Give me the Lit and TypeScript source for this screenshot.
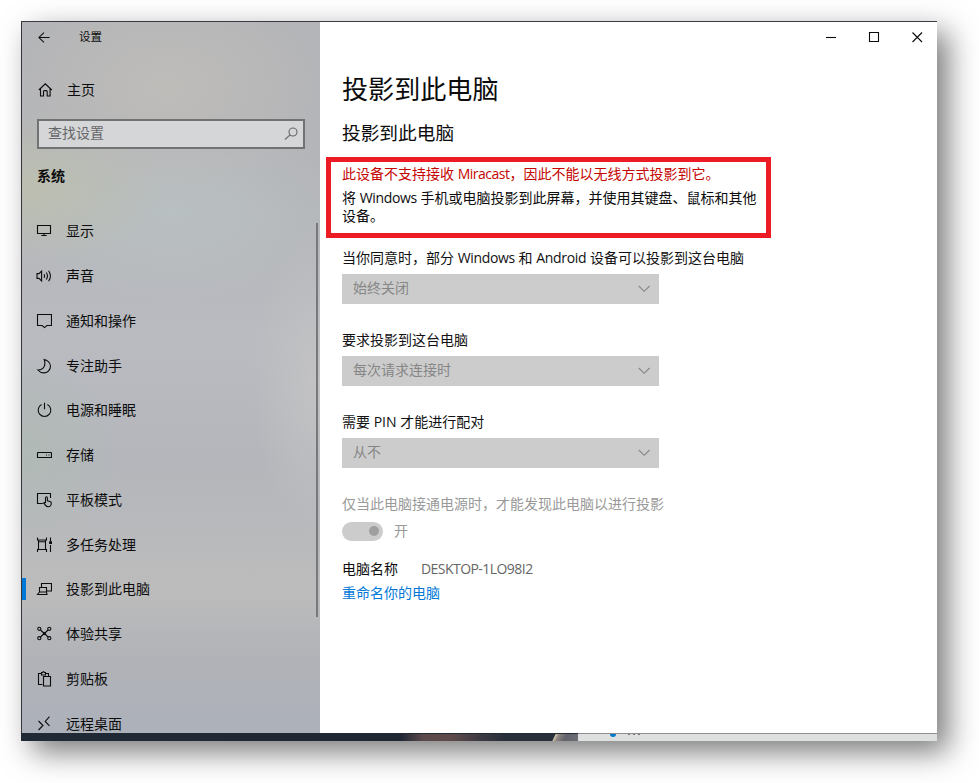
import { LitElement, html, css, svg } from "lit";
import { customElement, property } from "lit/decorators.js";

const icons: Record<string, unknown> = {
  back: svg`<path d="M14.500 8H3.100M8.500 2.800 3.100 8 8.500 13.200"/>`,
  home: svg`<path d="M1.800 8 8.300 1.800 14.800 8M3.500 6.600v7.400h3V9.600a1 1 0 0 1 1-1h1.700a1 1 0 0 1 1 1V14h2.900V6.600"/>`,
  search: svg`<circle cx="10" cy="6" r="4"/><path d="M7.100 8.900 2 13.500"/>`,
  display: svg`<path d="M1.500 2.500h13v8h-13zM8 10.500v2M5.300 12.500h5.400"/>`,
  sound: svg`<path d="M1 5.600h2L5.600 3v10L3 10.400H1zM8 6.200q1.100 1.800 0 3.600M10.300 4.500q2.300 3.500 0 7M12.600 2.800q3.700 5.200 0 10.400"/>`,
  notice: svg`<path d="M1.500 1.500h14v11h-4.600L8.500 14.600 6.100 12.500H1.500z"/>`,
  moon: svg`<path d="M8.200 1.500c2.600.6 6.300 2.900 6.300 6.500 0 3.800-2.700 6.900-6.700 6.900-2.800 0-4.600-1.300-6-2.900 1.800.1 3.700-.2 5-1.600C9.200 8 9.200 4.400 8.200 1.500z"/>`,
  power: svg`<path d="M5.600 2.600a6.300 6.300 0 1 0 5.800 0M8.500 .7v6.500"/>`,
  storage: svg`<path d="M2 5.500h13l.5.500v4.500h-14V6z"/><path d="M10 8h1M12.500 8h1"/>`,
  tablet: svg`<path d="M6.800 11.500H1.500V1.500h13v4.500"/><path d="M9.500 11V5.900q0-1.200.95-1.200t.95 1.200v3l2.600.6q1.400.4 1.300 1.700-.1 1.400-.8 2.500-.7 1-2.300 1-1.700 0-2.600-1.300L7.600 10.900q.7-.9 1.900.1"/>`,
  tasks: svg`<path d="M1.500 .5v2.500h9V.5M1.500 15v-2.500h9V15M2.500 3v9.500M9.500 3v9.500M3 4.700h6M14.500 .5v4M14.500 8V15"/><path d="M13.700 4.800h1.700v1.700h-1.700z" fill="currentColor"/>`,
  project: svg`<path d="M5.500 6.500v-4h10v7.500h-5M3.500 6.500h7v4.500h-7zM3.500 11l-2 2.500h9.500l-.5-2.500"/>`,
  share: svg`<circle cx="3.300" cy="2.800" r="1.600"/><circle cx="13.300" cy="2.800" r="1.600"/><circle cx="3.300" cy="12.200" r="1.600"/><circle cx="13.300" cy="12.200" r="1.600"/><path d="M4.500 4l7.600 7M12.100 4l-7.600 7"/><circle cx="8.300" cy="7.500" r="1"/>`,
  clipboard: svg`<path d="M6.500 13.500h-4v-11h3V1.500h1L7.500 .6l1 .9h1v1h3v2.500M5.500 2.500v1.500h4V2.500"/><path d="M7.500 5.500h7v9.500h-7z"/>`,
  remote: svg`<path d="M2.500 5 7 9.500 2.500 14M13.500 .7 9.200 5.400l4.300 4.400"/>`,
  chevron: svg`<path d="M2.800 5 8.200 10.300 13.600 5"/>`,
  min: svg`<path d="M3 8.500h10"/>`,
  max: svg`<path d="M3.500 3.500h9v9h-9z"/>`,
  close: svg`<path d="M3.500 3.500l9.500 9.500M13 3.500 3.500 13"/>`,
};

@customElement("ui-icon")
class UiIcon extends LitElement {
  @property() name = "";
  static styles = css`
    :host { display: block; flex: none; width: 16px; height: 16px; }
    svg { display: block; width: 100%; height: 100%; fill: none; stroke: currentColor; stroke-width: 1.1; }
  `;
  render() {
    return html`<svg viewBox="0 0 16 16">${icons[this.name]}</svg>`;
  }
}

@customElement("select-field")
class SelectField extends LitElement {
  @property() value = "";
  static styles = css`
    :host { display: block; height: 82px; }
    .label { height: 26px; line-height: 20px; color: #111; white-space: nowrap; }
    .box {
      box-sizing: border-box; width: 317px; height: 30px; padding: 0 7px 0 11px;
      display: flex; align-items: center; justify-content: space-between;
      background: #ccc; color: #868686;
    }
    .value { height: 22px; line-height: 20px; }
  `;
  render() {
    return html`<div class="label"><slot></slot></div>
      <div class="box"><span class="value">${this.value}</span><ui-icon name="chevron"></ui-icon></div>`;
  }
}

const nav: [string, string][] = [
  ["display", "显示"], ["sound", "声音"], ["notice", "通知和操作"], ["moon", "专注助手"],
  ["power", "电源和睡眠"], ["storage", "存储"], ["tablet", "平板模式"], ["tasks", "多任务处理"],
  ["project", "投影到此电脑"], ["share", "体验共享"], ["clipboard", "剪贴板"], ["remote", "远程桌面"],
];

@customElement("app-root")
class AppRoot extends LitElement {
  static styles = css`
    :host {
      display: block; box-sizing: border-box; width: 979px; height: 783px; padding: 21px;
      overflow: hidden; background: #fff; color: #0c0c0c;
      font: 14px/20px "Open Sans", "Noto Sans CJK SC", sans-serif;
    }
    * { box-sizing: border-box; }
    .window {
      width: 916px; height: 720px; display: flex; flex-direction: column;
      border-top: 1px solid #3a3a42; box-shadow: 11px 11px 28px rgba(0, 0, 0, .52);
    }
    .body { display: flex; height: 711px; }
    .side {
      width: 299px; height: 711px; display: flex; flex-direction: column; overflow: hidden;
      border-left: 1px solid #35363b; position: relative;
      background:
        radial-gradient(ellipse 160px 110px at 145px 65px, #bebcb9, rgba(190, 188, 185, 0)),
        radial-gradient(ellipse 130px 80px at 10px 165px, #bcbfb0, rgba(188, 191, 176, 0)),
        radial-gradient(ellipse 190px 90px at 150px 190px, #b9c0c1, rgba(185, 192, 193, 0)),
        radial-gradient(ellipse 100px 100px at 0 430px, #b1bab6, rgba(177, 186, 182, 0)),
        radial-gradient(ellipse 70px 150px at 299px 360px, #c3c3c4, rgba(195, 195, 196, 0)),
        linear-gradient(#b4b5b8, #b4b5b9 25%, #b9bbc0 45%, #b4b6bb 62%, #bcbcbc 80%, #b0b2b7 90%, #adb1ba);
    }
    .side > * { flex: none; }
    .titlebar { display: flex; align-items: center; height: 30px; padding-left: 14px; gap: 28px; font-size: 11.5px; }
    .titlebar ui-icon { width: 15px; height: 15px; }
    .home { display: flex; align-items: center; height: 30px; margin-top: 23px; padding-left: 15px; gap: 14px; }
    .search {
      display: flex; align-items: center; justify-content: space-between; width: 268px; height: 30px;
      margin: 14px 0 0 15px; padding: 0 4px 0 9px; border: 2px solid #717274;
      background: #d5d6d7; color: #66676a;
    }
    .search span { height: 22px; }
    .section { height: 20px; margin: 17px 0 0 15px; font-weight: 700; }
    .nav { margin-top: 23px; }
    .item { display: flex; align-items: center; height: 44.75px; padding-left: 14px; gap: 14px; position: relative; white-space: nowrap; }
    .item.active::before { content: ""; position: absolute; left: 0; top: 11px; width: 4px; height: 22px; background: #0078d7; }
    .thumb { position: absolute; right: 2px; top: 201px; width: 2px; height: 394px; background: #77787b; }
    .main { flex: 1; height: 711px; background: #fff; }
    .controls { display: flex; justify-content: flex-end; height: 30px; padding: 7px 12px 0 0; gap: 27px; }
    .content { padding: 14px 0 0 22px; }
    h1 { margin: 0; font-size: 26.100px; font-weight: 400; line-height: 46px; height: 46px; }
    h2 { margin: 9px 0 0; font-size: 18.700px; font-weight: 400; line-height: 24px; height: 24px; }
    .notice {
      width: 445px; height: 81px; margin: 12px 0 0 -16px; padding: 2px 0 0 11px;
      border: 5px solid #ed1c24; white-space: nowrap; line-height: 18px;
    }
    .error { height: 25px; line-height: 20px; color: #c50500; }
    .latin { letter-spacing: -.32px; }
    .error .latin { letter-spacing: -.5px; }
    .fields { margin-top: 10px; }
    .muted { color: #999; }
    .switch { display: flex; align-items: center; gap: 11px; height: 20px; margin-top: 7px; }
    .track { width: 41px; height: 19px; border-radius: 10px; background: #ccc; padding: 4.500px 0 0 27px; }
    .knob { width: 10px; height: 10px; border-radius: 50%; background: #9f9f9f; }
    .pc { display: flex; gap: 23px; margin-top: 18px; }
    .pcname { color: #666; letter-spacing: -.55px; }
    .link { color: #0078d7; margin-top: 4px; }
    .strip { display: flex; height: 8px; flex: none; }
    .desk {
      width: 557px;
      background:
        linear-gradient(115deg, transparent 484px, #c9bfa8 485px, #8b8480 488px, #62636b 495px, #77777f 520px, #53515a 550px),
        linear-gradient(90deg, #202936, #1f2733 380px, #5b4a4c 402px, #5e4a4b 430px, #3b3a42 460px, #292f3a 483px);
      border-top: 1px solid #222a33;
    }
    .task { flex: 1; display: flex; gap: 12px; padding-left: 32px; background: #dedfdf; border-top: 1px solid #8e8e90; }
    .dot { width: 6px; height: 3px; border-radius: 0 0 3px 3px; background: #0078c8; }
    .marks { width: 15px; height: 1px; background: repeating-linear-gradient(90deg, #777 0 2px, transparent 2px 5px); }
  `;
  render() {
    return html`<div class="window">
      <div class="body">
        <div class="side">
          <div class="titlebar"><ui-icon name="back"></ui-icon><span>设置</span></div>
          <div class="home"><ui-icon name="home"></ui-icon><span>主页</span></div>
          <div class="search"><span>查找设置</span><ui-icon name="search"></ui-icon></div>
          <div class="section">系统</div>
          <div class="nav">
            ${nav.map(([icon, label]) => html`<div class="item ${icon === "project" ? "active" : ""}">
              <ui-icon name=${icon}></ui-icon><span>${label}</span></div>`)}
          </div>
          <div class="thumb"></div>
        </div>
        <div class="main">
          <div class="controls"><ui-icon name="min"></ui-icon><ui-icon name="max"></ui-icon><ui-icon name="close"></ui-icon></div>
          <div class="content">
            <h1>投影到此电脑</h1>
            <h2>投影到此电脑</h2>
            <div class="notice">
              <div class="error">此设备不支持接收 <span class="latin">Miracast</span>，因此不能以无线方式投影到它。</div>
              <div>将 <span class="latin">Windows</span> 手机或电脑投影到此屏幕，并使用其键盘、鼠标和其他<br>设备。</div>
            </div>
            <div class="fields">
              <select-field value="始终关闭">当你同意时，部分 <span class="latin">Windows</span> 和 <span class="latin">Android</span> 设备可以投影到这台电脑</select-field>
              <select-field value="每次请求连接时">要求投影到这台电脑</select-field>
              <select-field value="从不">需要 PIN 才能进行配对</select-field>
            </div>
            <div class="muted">仅当此电脑接通电源时，才能发现此电脑以进行投影</div>
            <div class="switch muted"><div class="track"><div class="knob"></div></div><span>开</span></div>
            <div class="pc"><span>电脑名称</span><span class="pcname">DESKTOP-1LO98I2</span></div>
            <div class="link">重命名你的电脑</div>
          </div>
        </div>
      </div>
      <div class="strip"><div class="desk"></div><div class="task"><div class="dot"></div><div class="marks"></div></div></div>
    </div>`;
  }
}
